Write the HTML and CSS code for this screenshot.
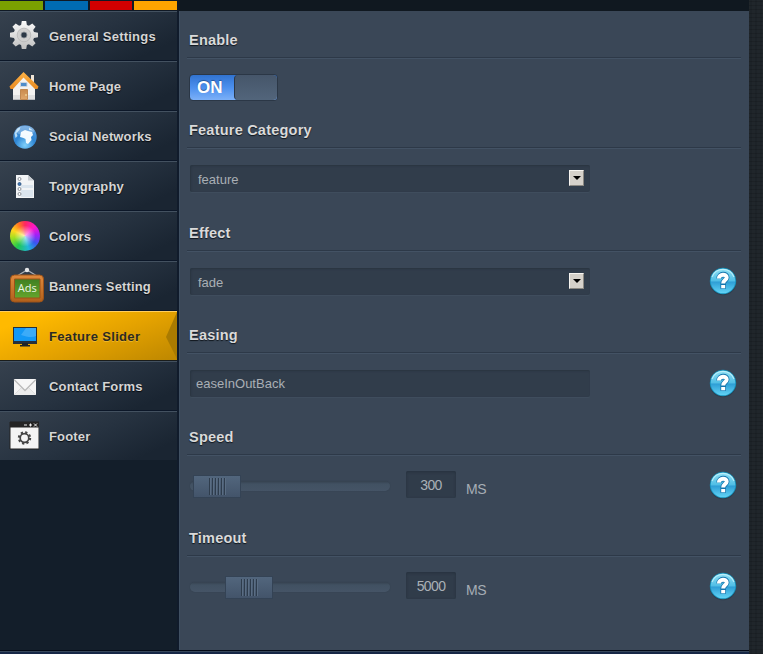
FILE: index.html
```html
<!DOCTYPE html>
<html lang="en">
<head>
<meta charset="utf-8">
<title>Theme Options</title>
<link rel="stylesheet" href="styles.css">
</head>
<body>
<svg width="0" height="0" class="defs" aria-hidden="true">
  <defs>
    <linearGradient id="silver" x2="0" y2="1"><stop stop-color="#fafafa"/><stop offset="1" stop-color="#bfbfbf"/></linearGradient>
    <linearGradient id="orange" x2="0" y2="1"><stop stop-color="#ffb347"/><stop offset="1" stop-color="#e88a20"/></linearGradient>
    <linearGradient id="door" x2="0" y2="1"><stop stop-color="#c98a4c"/><stop offset="1" stop-color="#e0a86c"/></linearGradient>
    <linearGradient id="wood" x2="0" y2="1"><stop stop-color="#e08a3c"/><stop offset="1" stop-color="#b0601c"/></linearGradient>
    <linearGradient id="green" x2="0" y2="1"><stop stop-color="#3f7f22"/><stop offset="1" stop-color="#64a52c"/></linearGradient>
    <radialGradient id="globe" cx=".5" cy=".85" r=".85"><stop stop-color="#7fd0fa"/><stop offset=".5" stop-color="#2f86d4"/><stop offset="1" stop-color="#5a9ada"/></radialGradient>
    <linearGradient id="help" x2="0" y2="1"><stop stop-color="#8fe0f4"/><stop offset=".48" stop-color="#52bfe6"/><stop offset=".55" stop-color="#2f9fd6"/><stop offset="1" stop-color="#62d4f6"/></linearGradient>
    <symbol id="help-icon" viewBox="0 0 28 29">
      <ellipse cx="14" cy="15.500" rx="13" ry="12.800" fill="#26323f" opacity=".55"/>
      <circle cx="14" cy="14" r="13.200" fill="#168fb8"/>
      <circle cx="14" cy="14" r="12.300" fill="url(#help)"/>
      <path d="M3 10A11.700 11.700 0 0 1 25 10" fill="none" stroke="#c6f3fb" stroke-width="1.300" opacity=".8"/>
      <path d="M10.200 11.400C10.200 6.400 18 6.600 17.700 10.600C17.500 13.200 14.200 13.200 14.200 16.800M14.200 16V21.800" fill="none" stroke="#1576ae" stroke-width="5.600"/>
      <path d="M9.900 11.400C9.900 6.600 18 6.800 17.700 10.600C17.500 13.200 14.200 13.200 14.200 16.600M14.200 17.900V21.200" fill="none" stroke="#fff" stroke-width="4"/>
    </symbol>
  </defs>
</svg>
<div class="app">
  <div class="topbar"><i class="c-green"></i><i class="c-blue"></i><i class="c-red"></i><i class="c-orange"></i></div>
  <div class="body">
    <nav class="sidebar">
      <a class="item"><span class="icon"><svg width="30" height="30" viewBox="0 0 30 30"><path d="M12.800 1h4.400l.7 4 2 .8L23.300 3.400l3.300 3.300-2.400 3.400.8 2 4 .7v4.400l-4 .7-.8 2 2.400 3.400-3.300 3.300-3.400-2.400-2 .8-.7 4h-4.400l-.7-4-2-.8-3.400 2.400-3.300-3.300 2.400-3.400-.8-2-4-.7v-4.400l4-.7.8-2-2.400-3.400 3.300-3.300 3.400 2.400 2-.8z" transform="translate(0 -1)" fill="url(#silver)"/><circle cx="15" cy="14" r="6.800" fill="#cfcfcf" stroke="#bdbdbd"/><circle cx="15" cy="14" r="3" fill="#2c3947" stroke="#8d9399" stroke-width=".8"/></svg></span>General Settings</a>
      <a class="item"><span class="icon"><svg width="30" height="30" viewBox="0 0 30 30"><path d="M22 4h3v8l-3-3z" fill="#f0e6d8"/><path d="M4 14L14.500 5 26 14v14.500H4z" fill="#f3f2f0"/><path d="M4 24h22v4.500H4z" fill="#e0e0e0"/><path d="M.5 15.500L14.500 1 29.500 15.500l-1 2.500h-2.500L14.500 6.500 4 18H1.500z" fill="url(#orange)"/><path d="M11.500 11.500h6.500v4h-6.500z" fill="#4d8ccb" stroke="#ccd4dc"/><path d="M11.500 18.500h7v10h-7z" fill="url(#door)" stroke="#c08850"/><circle cx="17" cy="24" r=".8" fill="#fff2b0"/></svg></span>Home Page</a>
      <a class="item"><span class="icon"><svg width="30" height="30" viewBox="0 0 30 30"><circle cx="16" cy="16" r="11.700" fill="url(#globe)"/><path d="M12 11l4-2 3 1 4 1 1 3-2 2 .5 3-3.500 4-2-1-.5-4-2-1-3.500-1z" fill="#f2faff"/><path d="M5.500 12l3-4.500 3-1.500-1 3-3 3 1 3-2 2zM20 6.500l4 3-4-.5z" fill="#b5dcf7"/><ellipse cx="16" cy="9.500" rx="9.500" ry="4.500" fill="#fff" opacity=".25"/></svg></span>Social Networks</a>
      <a class="item"><span class="icon"><svg width="30" height="30" viewBox="0 0 30 30"><path d="M7 4h12l6 5.500V27H7z" fill="#f2f4f6"/><path d="M12 14h12v3H12zM12 19h12v7H12z" fill="#dbe5ee"/><path d="M19 4v5.500h6z" fill="#c7ccd1"/><g fill="#fff" stroke="#8c9299" stroke-width="1"><circle cx="10.500" cy="8" r="1.500"/><circle cx="10.500" cy="13" r="1.500" fill="#3c77b8" stroke="#365b88"/><circle cx="10.500" cy="18" r="1.500"/><circle cx="10.500" cy="23" r="1.500"/></g></svg></span>Topygraphy</a>
      <a class="item"><span class="icon"><b class="wheel"></b></span>Colors</a>
      <a class="item"><span class="icon"><svg class="ads" width="36" height="36" viewBox="0 0 36 36"><path d="M8 9L18 3l10 6" fill="none" stroke="#aab0b6" stroke-width="1.200"/><circle cx="18" cy="3" r="2.200" fill="#e4e6e8"/><rect x="1.500" y="8" width="33" height="27" rx="4" fill="url(#wood)" stroke="#9c5218"/><path d="M5.500 12h25.500v19H5.500z" fill="url(#green)" stroke="#9c5218"/><text x="18.300" y="25" text-anchor="middle" class="ads-text">Ads</text></svg></span>Banners Setting</a>
      <a class="item active"><span class="icon"><svg width="30" height="30" viewBox="0 0 30 30"><path d="M4 6h24v17H4z" fill="#273039"/><path d="M5 7h22v13H5z" fill="#1398f5"/><path d="M17 7h10v8c-4 2-9 1-15-1z" fill="#59b8fa" opacity=".6"/><path d="M13 22h6v2h2v1.500H11V24h2z" fill="#1d252b"/></svg></span>Feature Slider<svg class="notch" width="12" height="48" viewBox="0 0 12 48"><path d="M12 0L1 25l11 22z" fill="#aa7b00"/></svg></a>
      <a class="item"><span class="icon"><svg width="30" height="30" viewBox="0 0 30 30"><path d="M5 8h22v16H5z" fill="#f5f5f5"/><path d="M5 24l8-8h6l8 8" fill="#ececec" stroke="#dedede"/><path d="M5 8.500l11 11 11-11" fill="#f7f7f7" stroke="#bbb" stroke-width="1.300"/></svg></span>Contact Forms</a>
      <a class="item"><span class="icon"><svg width="30" height="30" viewBox="0 0 30 30"><path d="M1 1h29v27H1z" fill="#f4f4f4" stroke="#222"/><path d="M1 1h29v5.500H1z" fill="#242424"/><path d="M15 4h3m2 0h3m-1.500-1.500v3M25 2.500l3 3m0-3l-3 3" stroke="#eee"/><circle cx="15.500" cy="17" r="5.500" fill="none" stroke="#444" stroke-width="2.400" stroke-dasharray="2.160 2.160"/><circle cx="15.500" cy="17" r="4.300" fill="none" stroke="#444" stroke-width="1.700"/></svg></span>Footer</a>
    </nav>
    <main class="main">
      <section class="s1"><h2>Enable</h2><div class="row"><div class="toggle"><span>ON</span><b></b></div></div></section>
      <section class="s2"><h2>Feature Category</h2><div class="row"><div class="field select">feature<i class="arrow"></i></div></div></section>
      <section class="s3"><h2>Effect</h2><div class="row"><div class="field select">fade<i class="arrow"></i></div><svg class="help" width="28" height="29"><use href="#help-icon"/></svg></div></section>
      <section class="s4"><h2>Easing</h2><div class="row"><div class="field">easeInOutBack</div><svg class="help" width="28" height="29"><use href="#help-icon"/></svg></div></section>
      <section class="s5"><h2>Speed</h2><div class="row"><div class="slider"><b class="handle"></b></div><div class="num">300</div><span class="unit">MS</span><svg class="help" width="28" height="29"><use href="#help-icon"/></svg></div></section>
      <section class="s6"><h2>Timeout</h2><div class="row"><div class="slider"><b class="handle far"></b></div><div class="num">5000</div><span class="unit">MS</span><svg class="help" width="28" height="29"><use href="#help-icon"/></svg></div></section>
    </main>
  </div>
  <div class="foot"></div>
</div>
</body>
</html>
```
FILE: styles.css
```css
* { box-sizing: border-box; }
body {
  margin: 0; height: 654px; overflow: hidden;
  font-family: "Liberation Sans", Arial, sans-serif;
  background: repeating-linear-gradient(0deg, rgba(0,0,0,.13) 0 1px, transparent 1px 4px), repeating-linear-gradient(90deg, #1d2328 0 2px, #20262b 2px 5px);
}
.defs { position: absolute; }
.app { width: 749px; height: 654px; display: flex; flex-direction: column; background: #131e2a; }
.topbar { height: 11px; padding: 1px 0; display: flex; gap: 2px; background: linear-gradient(90deg, #101925 179px, #101820 179px); }
.topbar i { height: 9px; width: 43px; }
.topbar .c-green { background: #7ba000; }
.topbar .c-blue { background: #006bb3; }
.topbar .c-red { background: #d20000; width: 42px; }
.topbar .c-orange { background: #ffa400; }
.body { height: 639px; display: flex; }
.sidebar { width: 179px; border-right: 2px solid #101b2b; }
.item {
  height: 50px; display: flex; align-items: center; position: relative;
  font-size: 13px; font-weight: bold; letter-spacing: .15px; color: #d5d5d5; text-shadow: 0 1px 1px #05090d;
  border-top: 1px solid #435160; border-bottom: 1px solid #0c1728;
  background: linear-gradient(155deg, #36414e, #263240 50%, #1a2532 85%);
}
.item:first-child { letter-spacing: .22px; }
.item:last-child { border-bottom: 0; height: 49px; }
.item.active {
  color: #2c2a22; text-shadow: 0 1px 0 rgba(255,210,80,.5); letter-spacing: .33px;
  border-top-color: #ffce60; border-bottom-color: #1a1d1c;
  background: linear-gradient(160deg, #ffba00 15%, #e4a200 55%, #bd8700);
}
.icon { width: 49px; height: 48px; padding-left: 9px; display: flex; align-items: center; flex: none; }
.ads { margin-top: -2px; flex: none; }
.ads-text { font: 11px "Open Sans", sans-serif; fill: #edf5e7; text-shadow: none; letter-spacing: 0; }
.wheel {
  width: 30px; height: 30px; margin-left: 1px; border-radius: 50%;
  background: radial-gradient(circle, rgba(255,255,255,.7), rgba(255,255,255,0) 50%), conic-gradient(#ff2860, #ff18c8 45deg, #a020f8 85deg, #3858f0 125deg, #20b8d8 165deg, #20c850 215deg, #a0e020 260deg, #ffd820 295deg, #ff7820 330deg, #ff2860);
}
.notch { position: absolute; right: 0; top: 0; }
.main { width: 570px; padding: 18px 10px 0; background: #3a4757; border-left: 1px solid #405062; }
section { display: flex; flex-direction: column; }
.s1 { height: 90px; }
.s2 { height: 103px; }
.s3, .s4 { height: 102px; }
.s5 { height: 101px; }
h2 {
  margin: 0 0 0 -3px; padding-left: 2px; height: 30px; line-height: 22px; width: 554px;
  font-size: 14.500px; letter-spacing: .22px; color: #dadada; text-shadow: 0 1px 1px #10161d;
  border-bottom: 1px solid #435264; box-shadow: inset 0 -1px #2d3948;
}
.row { display: flex; height: 27px; margin-top: 16px; align-items: center; }
.s1 .row, .s5 .row, .s6 .row { margin-top: 15px; }
.toggle { width: 89px; height: 27px; margin-left: -1px; display: flex; border-radius: 4px; overflow: hidden; border: 1px solid #2b3746; background: linear-gradient(#3173d0, #4c90ee 50%, #7cb0f8); }
.toggle span { width: 44px; padding-left: 7px; font-weight: bold; font-size: 17px; line-height: 25px; color: #fff; text-shadow: 0 -1px 1px #235598; }
.toggle b { flex: 1; border-left: 1px solid #2b3746; border-radius: 4px; background: linear-gradient(#46566a, #52657b); }
.field { width: 400px; height: 27px; padding-left: 6px; line-height: 27px; font-size: 13px; color: #a9afb5; border-radius: 2px; background: #313d4b; box-shadow: inset 1px 1px 2px #293441, 0 1px #3f4d5d; }
.select { padding: 1px 6px 0 8px; display: flex; justify-content: space-between; }
.arrow { width: 15px; height: 16px; margin-top: 4px; background: #d5d1ca; border: 1px solid; border-color: #f7f5f1 #8b8882 #8b8882 #f7f5f1; display: flex; align-items: center; justify-content: center; }
.arrow::before { content: ""; border: 4px solid transparent; border-top-color: #000; border-bottom: 0; }
.help { margin-left: auto; margin-right: 2px; }
.s5 .help, .s6 .help { margin-top: 2px; }
.slider { width: 200px; height: 10px; margin-top: 3px; border-radius: 5px; background: linear-gradient(#35414f, #415162 30%, #455466); box-shadow: 0 0 1px #2c3846; display: flex; align-items: center; padding-left: 3px; }
.handle { width: 48px; height: 23px; flex: none; display: flex; border: 1px solid #344355; background: linear-gradient(#52667d, #43546a); justify-content: center; align-items: center; }
.handle::before { content: ""; width: 17px; height: 17px; background: repeating-linear-gradient(90deg, #2e3c4c 0 1px, #5a6d83 1px 2px, transparent 2px 3px); }
.far { margin-left: 32px; }
.num { width: 50px; height: 27px; margin-left: 16px; text-align: center; line-height: 28px; font-size: 14px; letter-spacing: -.6px; color: #a9b0b6; background: #303c4a; border-radius: 2px; box-shadow: inset 0 1px 3px #26313e; }
.unit { margin: 9px 0 0 10px; font-size: 14px; letter-spacing: -.4px; color: #a6adb5; }
.foot { height: 4px; background: linear-gradient(#030916 1px, #37475b 1px 2px, #162746 2px); }
```
